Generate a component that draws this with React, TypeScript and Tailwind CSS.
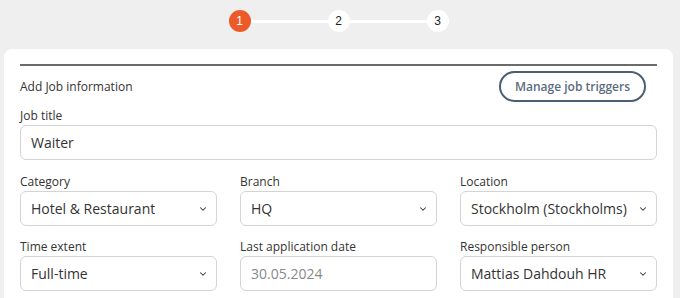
import { ChevronDown } from "lucide-react";

const font = { fontFamily: '"Open Sans", "Noto Sans", sans-serif' };

function Step({ n, active }: { n: number; active?: boolean }) {
	return (
		<div
			className={`flex h-[22px] w-[22px] items-center justify-center rounded-full text-[12px] ${
				active ? "bg-[#ec5a29] text-white" : "bg-white text-[#222]"
			}`}
			style={{ fontFamily: '"Liberation Sans", Arial, sans-serif' }}
		>
			{n}
		</div>
	);
}

function Label({ children }: { children: React.ReactNode }) {
	return <div className="mb-[2px] text-[12px] leading-[14px] text-[#333]">{children}</div>;
}

function Select({ value }: { value: string }) {
	return (
		<div className="flex h-[35px] items-center justify-between rounded-[6px] border border-[#d4d4d4] bg-white pl-[10px] pr-[8px] text-[14px] text-[#333]">
			<span className="truncate">{value}</span>
			<ChevronDown size={10} strokeWidth={2.5} className="shrink-0 text-[#333]" />
		</div>
	);
}

function Field({ label, value, select = true, muted }: { label: string; value: string; select?: boolean; muted?: boolean }) {
	return (
		<div>
			<Label>{label}</Label>
			{select ? (
				<Select value={value} />
			) : (
				<div
					className={`flex h-[35px] items-center rounded-[6px] border border-[#d4d4d4] bg-white px-[10px] text-[14px] ${
						muted ? "text-[#888]" : "text-[#333]"
					}`}
				>
					{value}
				</div>
			)}
		</div>
	);
}

export default function App() {
	return (
		<div className="h-[298px] w-[680px] overflow-hidden bg-[#efefef]" style={font}>
			<div className="flex items-center justify-center pt-[10px] pr-[3px]">
				<Step n={1} active />
				<div className="h-[3px] w-[77px] bg-white" />
				<Step n={2} />
				<div className="h-[3px] w-[77px] bg-white" />
				<Step n={3} />
			</div>
			<div className="mt-[17px] ml-[4px] mr-[7px] rounded-[8px] bg-white px-[16px] pt-[15px] pb-[20px]">
				<div className="h-[2px] bg-[#6b6b6b]" />
				<div className="mt-[5px] flex items-center justify-between">
					<div className="text-[12px] text-[#333]">Add Job information</div>
					<button
						type="button"
						className="mr-[11px] h-[31px] rounded-full border-2 border-[#4d5d73] px-[14px] text-[12px] font-semibold text-[#5b6b80]"
					>
						Manage job triggers
					</button>
				</div>
				<div className="mt-[7px]">
					<Label>Job title</Label>
					<div className="flex h-[35px] items-center rounded-[6px] border border-[#d4d4d4] bg-white px-[10px] text-[14px] text-[#333]">
						Waiter
					</div>
				</div>
				<div className="mt-[15px] grid grid-cols-3 gap-x-[23px] gap-y-[14px]">
					<Field label="Category" value="Hotel & Restaurant" />
					<Field label="Branch" value="HQ" />
					<Field label="Location" value="Stockholm (Stockholms)" />
					<Field label="Time extent" value="Full-time" />
					<Field label="Last application date" value="30.05.2024" select={false} muted />
					<Field label="Responsible person" value="Mattias Dahdouh HR" />
				</div>
			</div>
		</div>
	);
}
